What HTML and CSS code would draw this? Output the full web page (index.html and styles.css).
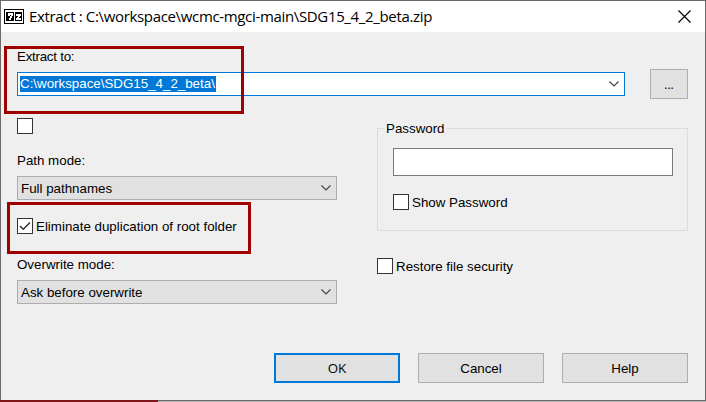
FILE: index.html
```html
<!DOCTYPE html>
<html lang="en">
<head>
<meta charset="utf-8">
<title>Extract</title>
<link rel="stylesheet" href="styles.css">
</head>
<body>
<main class="window">
  <header class="titlebar">
    <svg class="app-icon" width="20" height="15" viewBox="0 0 20 15" shape-rendering="crispEdges">
      <path fill="#000" d="M0 0h20v15H0z"/>
      <path fill="#fff" d="M1 1h18v13H1z"/>
      <path fill="#000" d="M2 3h16v9H2z"/>
      <path fill="#fff" d="M4 4h5v3H8v2H7v2H5V9h1V7h1V6H6v1H4zM10 3h1v9h-1zM12 5h5v2h-1v1h-1v1h2v2h-5V9h1V8h1V7h-2z"/>
    </svg>
    <h1 class="title">Extract : C:\workspace\wcmc-mgci-main\SDG15_4_2_beta.zip</h1>
    <svg class="close" width="13" height="13" viewBox="0 0 13 13"><path d="M.5.5l12 12M12.5.5l-12 12" stroke="#000" stroke-width="1.2"/></svg>
  </header>
  <section class="content">
    <div class="label t-extract"><span>Extract to:</span></div>
    <div class="destination">
      <div class="combo combo-edit"><span class="selected">C:\workspace\SDG15_4_2_beta\</span>
        <svg class="chevron" width="10" height="6" viewBox="0 0 10 6"><path d="M.5.5L5 5 9.500.5"/></svg>
      </div>
      <button class="button browse">...</button>
    </div>
    <div class="columns">
      <div class="left">
        <div class="check"><i class="box"></i></div>
        <div class="label l-path"><span>Path mode:</span></div>
        <div class="combo"><span class="value">Full pathnames</span>
          <svg class="chevron" width="10" height="6" viewBox="0 0 10 6"><path d="M.5.5L5 5 9.500.5"/></svg>
        </div>
        <div class="check eliminate"><i class="box"><svg width="14" height="14" viewBox="0 0 14 14"><path d="M2 7l3.300 3.300L12 3.500" fill="none" stroke="#333" stroke-width="1.500"/></svg></i><span>Eliminate duplication of root folder</span></div>
        <div class="label l-over"><span>Overwrite mode:</span></div>
        <div class="combo"><span class="value">Ask before overwrite</span>
          <svg class="chevron" width="10" height="6" viewBox="0 0 10 6"><path d="M.5.5L5 5 9.500.5"/></svg>
        </div>
      </div>
      <div class="right">
        <div class="group">
          <span class="legend">Password</span>
          <input class="input" type="password">
          <div class="check"><i class="box"></i><span>Show Password</span></div>
        </div>
        <div class="check restore"><i class="box"></i><span>Restore file security</span></div>
      </div>
    </div>
    <footer class="actions">
      <button class="button default">OK</button>
      <button class="button">Cancel</button>
      <button class="button">Help</button>
    </footer>
  </section>
  <div class="mark mark-path"></div>
  <div class="mark mark-root"></div>
</main>
<div class="edge"></div>
</body>
</html>
```
FILE: styles.css
```css
* { box-sizing: border-box; }
body {
  margin: 0;
  width: 706px;
  height: 402px;
  overflow: hidden;
  background: #b9b9b9;
  font: 13.33px/16px "Liberation Sans", Arial, sans-serif;
  color: #000;
}
.window {
  position: relative;
  height: 401px;
  border: 1px solid #6b6a6b;
  background: #efefef;
}
.titlebar {
  display: flex;
  align-items: center;
  height: 31px;
  padding: 0 14px 0 3px;
  background: #fff;
}
.app-icon { margin-right: 5px; }
.title {
  flex: 1;
  margin: 0;
  padding-bottom: 1px;
  font: 400 15px/20px "Open Sans", sans-serif;
  letter-spacing: -0.34px;
  white-space: nowrap;
}
.close { display: block; margin-bottom: 1px; }
.content { padding: 16px 17px 0 16px; }
.label { height: 16px; padding-top: 1px; white-space: nowrap; }
.t-extract { letter-spacing: -0.25px; }
.destination {
  display: flex;
  align-items: center;
  justify-content: space-between;
  height: 30px;
  margin-top: 5px;
}
.combo {
  display: flex;
  align-items: center;
  justify-content: space-between;
  width: 320px;
  height: 24px;
  padding: 0 5px 0 3px;
  border: 1px solid #adadad;
  background: #e1e1e1;
  white-space: nowrap;
}
.value { padding-top: 2px; }
.combo-edit {
  width: 608px;
  padding-left: 2px;
  border-color: #0078d7;
  background: #fff;
}
.selected { height: 16px; padding-right: 1px; background: #0078d7; color: #fff; }
.chevron path { fill: none; stroke: #444; stroke-width: 1.2; }
.button {
  width: 126px;
  height: 30px;
  padding: 2px 0 0;
  border: 1px solid #adadad;
  background: #e1e1e1;
  color: #000;
  font: inherit;
}
.browse { width: 38px; padding-top: 1px; font-family: "Open Sans", sans-serif; font-size: 12px; }
.columns { display: flex; justify-content: space-between; height: 254px; padding-top: 19px; }
.left { width: 320px; }
.right { width: 311px; padding-top: 10px; }
.check { display: flex; align-items: center; height: 16px; white-space: nowrap; }
.check span { padding-top: 2px; }
.box {
  flex: none;
  width: 16px;
  height: 16px;
  margin-right: 3px;
  border: 1px solid #333;
  background: #fff;
}
.box svg { display: block; }
.l-path { margin: 18px 0 8px; }
.eliminate { margin-top: 18px; }
.l-over { margin: 22px 0 8px; }
.group {
  height: 103px;
  padding: 0 14px 0 15px;
  border: 1px solid #dcdcdc;
}
.legend {
  display: block;
  width: max-content;
  height: 16px;
  margin: -9px 0 0 -9px;
  padding: 1px 2px 0;
  background: #efefef;
}
.input {
  display: block;
  width: 280px;
  height: 28px;
  margin: 12px 0 18px;
  border: 1px solid #7a7a7a;
  background: #fff;
  outline: 0;
}
.restore { margin-top: 27px; }
.actions { display: flex; justify-content: flex-end; gap: 18px; }
.default { padding-top: 0; border: 2px solid #0078d7; font-family: "Open Sans", sans-serif; }
.mark { position: absolute; border: 3px solid #a00000; }
.mark-path { left: 3px; top: 45px; width: 240px; height: 68px; }
.mark-root { left: 6px; top: 201px; width: 244px; height: 52px; }
.edge { width: 158px; height: 2px; margin-top: -1px; position: relative; background: #7d1519; }
```
